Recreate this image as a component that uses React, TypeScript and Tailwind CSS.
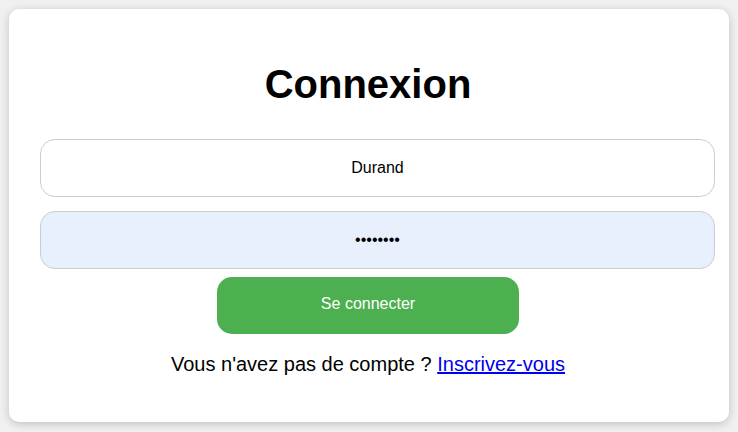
export default function App() {
  return (
    <div className="min-h-[432px] bg-[#f0f0f0] pt-[9px] font-['Liberation_Sans',Arial,sans-serif]">
      <div className="w-[720px] mx-auto bg-white rounded-[10px] shadow-[0_2px_8px_rgba(0,0,0,0.2)] pt-[52px] pb-[46px] pl-[31px] pr-[14px] flex flex-col">
        <h1 className="text-[40px] leading-[46px] font-bold text-black text-center pr-[19px]">Connexion</h1>
        <input
          readOnly
          value="Durand"
          className="mt-[32px] w-[675px] h-[58px] rounded-[15px] border border-[#cccccc] bg-white text-center text-[16px] text-black outline-none"
        />
        <input
          readOnly
          type="password"
          value="motdepas"
          className="mt-[14px] w-[675px] h-[58px] rounded-[15px] border border-[#cccccc] bg-[#e8f0fe] text-center text-[16px] text-black outline-none"
        />
        <div className="pr-[19px] flex justify-center mt-[8px]">
          <button className="w-[302px] h-[57px] rounded-[15px] bg-[#4caf50] text-white text-[16px] pb-[3px]">
            Se connecter
          </button>
        </div>
        <p className="mt-[19px] pr-[19px] text-center text-[20px] leading-[23px] text-black">
          Vous n'avez pas de compte ?{' '}
          <a href="#" className="text-[#0000ee] underline">Inscrivez-vous</a>
        </p>
      </div>
    </div>
  );
}
